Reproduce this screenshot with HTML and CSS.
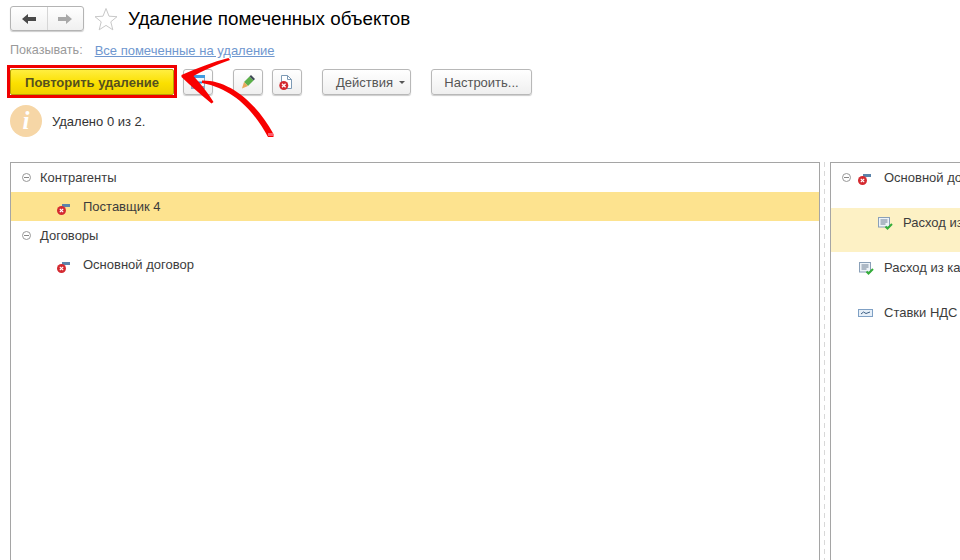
FILE: index.html
```html
<!DOCTYPE html>
<html lang="ru">
<head>
<meta charset="utf-8">
<title>Удаление помеченных объектов</title>
<link rel="stylesheet" href="styles.css">
</head>
<body>
<div class="page">
  <header class="head">
    <div class="nav">
      <button class="nav-btn"><svg width="14" height="10" viewBox="0 0 14 10"><path d="M0 5 6 0v3h8v4H6v3z" fill="#4a4a4a"/></svg></button>
      <button class="nav-btn"><svg width="14" height="10" viewBox="0 0 14 10"><path d="M14 5 8 0v3H0v4h8v3z" fill="#a8a8a8"/></svg></button>
    </div>
    <svg class="star" width="24" height="24" viewBox="0 0 24 24"><path d="M12 1.500l3 7.700 8 .5-6.200 5.100 2 8L12 18.400 5.200 22.800l2-8L1 9.700l8-.5z" fill="#fff" stroke="#c8c8c8"/></svg>
    <h1 class="title">Удаление помеченных объектов</h1>
  </header>
  <div class="show">
    <span class="show-label">Показывать:</span>
    <a class="show-link">Все помеченные на удаление</a>
  </div>
  <div class="toolbar">
    <div class="primary-frame"><button class="primary">Повторить удаление</button></div>
    <button class="tool tool-first"><svg width="14" height="14" viewBox="0 0 14 14"><rect x=".5" y=".5" width="13" height="13" fill="#f2f6fa" stroke="#8fa8c0"/><rect x="0" y="0" width="14" height="3" fill="#3f9be0"/><path d="M1 7.500 4 5v1.500h7v2H4V10z" fill="#2f8fd8"/><path d="M1 11h12v2.500H1z" fill="#8ea6bf"/></svg></button>
    <button class="tool tool-gap"><svg width="14" height="14" viewBox="0 0 14 14"><path d="M3 7 8.500 1.500l4 4L7 11z" fill="#5cb04a"/><path d="M8.500 1.500 10 0l4 4-1.500 1.500z" fill="#3f4a55"/><path d="M3 7l4 4-6 2.500z" fill="#e8a75a"/></svg></button>
    <button class="tool"><svg width="16" height="16" viewBox="0 0 16 16"><path d="M2.500 1.500h6l4 4v9h-10z" fill="#fff" stroke="#7d9ab5"/><path d="M8.500 1.500v4h4" fill="none" stroke="#7d9ab5"/><circle cx="4.800" cy="11.500" r="4.500" fill="#d42a30"/><path d="M3 9.700l3.600 3.600m0-3.600L3 13.300" stroke="#fff" stroke-width="1.300"/></svg></button>
    <button class="tool tool-text tool-menu">Действия<span class="caret"></span></button>
    <button class="tool tool-text tool-setup">Настроить...</button>
  </div>
  <div class="status">
    <span class="info-icon">i</span>
    <span>Удалено 0 из 2.</span>
  </div>
  <div class="panels">
    <section class="panel panel-left">
      <div class="row"><span class="toggle"></span><span class="label">Контрагенты</span></div>
      <div class="row row-child row-active">
        <svg class="ico" width="14" height="13" viewBox="0 0 14 13"><path d="M5 2h8v3H5z" fill="#5b84ab"/><circle cx="4.500" cy="8.500" r="4.500" fill="#d42a30"/><path d="M2.800 6.800l3.400 3.400m0-3.400l-3.400 3.400" stroke="#fff" stroke-width="1.200"/></svg>
        <span class="label">Поставщик 4</span>
      </div>
      <div class="row"><span class="toggle"></span><span class="label">Договоры</span></div>
      <div class="row row-child">
        <svg class="ico" width="14" height="13" viewBox="0 0 14 13"><path d="M5 2h8v3H5z" fill="#5b84ab"/><circle cx="4.500" cy="8.500" r="4.500" fill="#d42a30"/><path d="M2.800 6.800l3.400 3.400m0-3.400l-3.400 3.400" stroke="#fff" stroke-width="1.200"/></svg>
        <span class="label">Основной договор</span>
      </div>
    </section>
    <div class="splitter"></div>
    <section class="panel panel-right">
      <div class="rrow rrow-head"><span class="toggle"></span>
        <svg class="ico" width="14" height="13" viewBox="0 0 14 13"><path d="M5 2h8v3H5z" fill="#5b84ab"/><circle cx="4.500" cy="8.500" r="4.500" fill="#d42a30"/><path d="M2.800 6.800l3.400 3.400m0-3.400l-3.400 3.400" stroke="#fff" stroke-width="1.200"/></svg>
        <span class="label">Основной договор</span></div>
      <div class="rrow rrow-active">
        <svg class="ico" width="16" height="13" viewBox="0 0 16 13"><rect x=".5" y=".5" width="11" height="9.500" fill="#eef3f8" stroke="#8aa0b8"/><path d="M2.500 3h7M2.500 5h7M2.500 7h5" stroke="#6d7f92"/><path d="M7.500 9.500l2 2 4.500-4.500" fill="none" stroke="#34ad3a" stroke-width="2"/></svg>
        <span class="label">Расход из кассы</span></div>
      <div class="rrow rrow-doc">
        <svg class="ico" width="16" height="13" viewBox="0 0 16 13"><rect x=".5" y=".5" width="11" height="9.500" fill="#eef3f8" stroke="#8aa0b8"/><path d="M2.500 3h7M2.500 5h7M2.500 7h5" stroke="#6d7f92"/><path d="M7.500 9.500l2 2 4.500-4.500" fill="none" stroke="#34ad3a" stroke-width="2"/></svg>
        <span class="label">Расход из кассы</span></div>
      <div class="rrow rrow-rate">
        <svg class="ico" width="15" height="8" viewBox="0 0 15 8"><rect x=".5" y=".5" width="14" height="7" fill="#e6eff8" stroke="#7fa0c4"/><path d="M3 5l2.500-2 2.500 1.500L12 3" fill="none" stroke="#3d5f85"/></svg>
        <span class="label">Ставки НДС</span></div>
    </section>
  </div>
  <svg class="annotation" width="960" height="160" viewBox="0 0 960 160">
    <path d="M181.500 75C197 68 213 62 228.500 58L230 60C215 65 203 71 193.500 76 201 84 208 93 213.500 102L211.500 103.500C200 94 190 85 181.500 77z" fill="#f80000"/>
    <path d="M202 80.500C229 80 256 102 273.500 134L273.500 137 268 137C255 113 235 89 202 83z" fill="#f80000"/>
    <rect x="268" y="133" width="5" height="3" fill="#ff5a6a"/>
  </svg>
</div>
</body>
</html>
```
FILE: styles.css
```css
* { box-sizing: border-box; }
html, body { margin: 0; padding: 0; }
body { font-family: "Liberation Sans", Arial, sans-serif; font-size: 13px; color: #333; background: #fff; }
.page { position: relative; width: 960px; height: 560px; overflow: hidden; padding: 6px 0 0 10px; }
button { font-family: inherit; font-size: 13px; color: #444; padding: 0; margin: 0; }
.head { display: flex; align-items: center; height: 25px; }
.nav { display: flex; width: 74px; height: 25px; border: 1px solid #b4b4b4; border-radius: 3px; background: linear-gradient(#fff, #f0f0f0); box-shadow: 0 1px 1px #ccc; }
.nav-btn { flex: 1; border: 0; background: none; display: flex; align-items: center; justify-content: center; }
.nav-btn + .nav-btn { border-left: 1px solid #d6d6d6; }
.star { margin-left: 10px; }
.title { margin: 0 0 0 10px; font-size: 18.800px; font-weight: 400; color: #000; }
.show { display: flex; gap: 12px; margin-top: 12px; height: 15px; line-height: 15px; }
.show-label { color: #9a9a9a; font-size: 12.600px; }
.show-link { color: #6f97cf; text-decoration: underline; }
.toolbar { display: flex; align-items: flex-start; margin-top: 7px; margin-left: -3px; }
.primary-frame { border: 3px solid #f00000; padding: 1px 0 0 0; height: 33px; width: 170px; }
.primary { display: block; width: 164px; height: 26px; border: 1px solid #b8a000; border-radius: 2px; background: linear-gradient(#ffee40, #fbe000 55%, #efd000); font-weight: 700; color: #55501f; }
.tool { height: 26px; width: 30px; margin-top: 4px; margin-left: 9px; border: 1px solid #b8b8b8; border-radius: 3px; background: linear-gradient(#fff, #efefef); box-shadow: 0 1px 1px #ccc; display: flex; align-items: center; justify-content: center; }
.tool-first { margin-left: 6px; }
.tool-gap { margin-left: 20px; }
.tool-text { color: #555; }
.tool-menu { width: 89px; margin-left: 20px; gap: 6px; justify-content: flex-start; padding-left: 13px; }
.tool-setup { width: 101px; margin-left: 20px; }
.caret { width: 0; height: 0; border: 3px solid transparent; border-top: 3px solid #555; border-bottom: 0; }
.status { display: flex; align-items: center; gap: 10px; margin-top: 7px; height: 32px; }
.info-icon { width: 32px; height: 32px; border-radius: 50%; background: #f6d6a6; color: #fff; font: italic 700 25px/32px "Liberation Serif", serif; text-align: center; }
.panels { display: flex; margin-top: 25px; margin-right: -60px; height: 398px; }
.panel { flex: none; border: 1px solid #a5a5a5; border-bottom: 0; }
.panel-left { width: 810px; }
.splitter { flex: none; width: 10px; background: repeating-linear-gradient(#d8d8d8 0 5px, transparent 5px 9px) 4px 0 / 1px 100% no-repeat; }
.panel-right { width: 200px; overflow: hidden; white-space: nowrap; }
.row { display: flex; align-items: center; height: 29px; padding-left: 11px; }
.toggle { width: 9px; height: 9px; border: 1px solid #999; border-radius: 50%; position: relative; flex: none; margin-right: 9px; }
.toggle::after { content: ""; position: absolute; left: 1px; right: 1px; top: 3px; height: 1px; background: #888; }
.row-child { padding-left: 46px; }
.row-child .ico { margin: 3px 12px 0 0; }
.row-active { background: #fde38f; }
.label { color: #3c3c3c; }
.rrow { display: flex; align-items: flex-start; height: 44px; padding-top: 7px; }
.rrow-head { height: 45px; padding-left: 11px; }
.rrow-head .toggle { margin: 3px 7px 0 0; }
.rrow-head .ico { margin: 2px 12px 0 0; }
.rrow-active { background: #fdf1c5; padding-left: 47px; }
.rrow-active .ico { margin: 2px 9px 0 0; }
.rrow-doc { padding-left: 28px; padding-top: 8px; }
.rrow-doc .ico { margin: 2px 9px 0 0; }
.rrow-rate { padding-left: 27px; padding-top: 9px; }
.rrow-rate .ico { margin: 4px 11px 0 0; }
.annotation { position: absolute; left: 0; top: 0; pointer-events: none; }
```
